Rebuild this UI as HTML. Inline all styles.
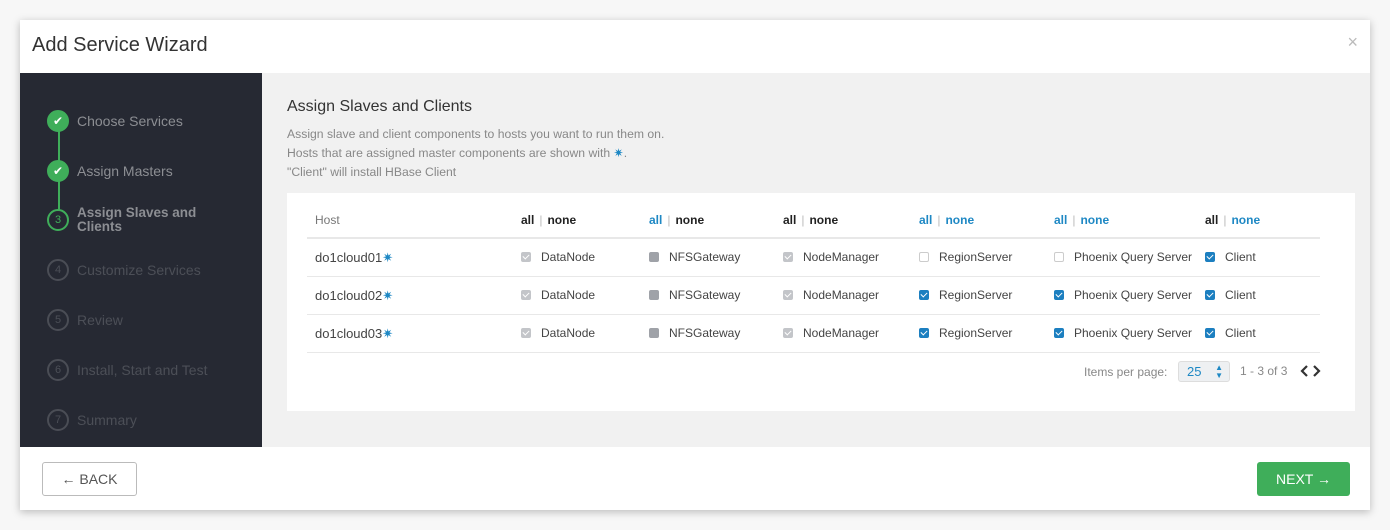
<!DOCTYPE html>
<html><head><meta charset="utf-8"><style>
*{box-sizing:border-box;margin:0;padding:0}
body{width:1390px;height:530px;background:#f7f7f7;font-family:"Liberation Sans",sans-serif;position:relative;overflow:hidden}
.modal{position:absolute;left:20px;top:20px;width:1350px;height:490px;background:#fff;box-shadow:0 2px 8px rgba(0,0,0,.25)}
.title{position:absolute;left:12px;top:14px;font-size:20px;color:#333}
.close{position:absolute;right:12px;top:12px;font-size:18px;color:#bbb}
.side{position:absolute;left:0;top:53px;width:242px;height:374px;background:#262933}
.content{position:absolute;left:242px;top:53px;width:1108px;height:374px;background:#f1f1f1}
.step{position:absolute;left:27px;font-size:14px;color:#4c4f57;white-space:nowrap}
.step .c{position:absolute;left:0;top:0;width:22px;height:22px;border-radius:50%;border:2px solid #4a4d55;background:#262933;font-size:11px;text-align:center;line-height:18px}
.step span.lbl{position:absolute;left:30px;top:3px}
.done .c{background:#3fae5a;border-color:#3fae5a;color:#fff;font-size:12px}
.done span.lbl{color:#8c8e93}
.cur .c{border-color:#3fae5a;color:#3fae5a}
.cur span.lbl{color:#8c8e93;font-weight:bold;line-height:14px;top:-3px;font-size:13.5px}
.line{position:absolute;left:38px;width:2px;background:#3fae5a}
h3{position:absolute;left:25px;top:25px;font-size:16px;font-weight:normal;color:#333}
.desc{position:absolute;left:25px;top:52px;font-size:12.2px;color:#888;line-height:19px}
.card{position:absolute;left:25px;top:120px;width:1068px;height:218px;background:#fff}
.t{position:absolute;font-size:12px;color:#444;white-space:nowrap}
.hd{font-weight:bold;color:#222}
.bl{color:#1e88c4}
.sep{color:#bbb;font-weight:normal;margin:0 5px}
.hl{position:absolute;left:20px;width:1013px;background:#e8e8e8;height:1px}
.cb{position:absolute;width:10px;height:10px;border-radius:2px}
.g{background:#c3c5c9}
.gs{background:#9fa2a8}
.b{background:#1c7fc0}
.e{border:1px solid #ccc;background:#fff}
.cb.g::after,.cb.b::after{content:"";position:absolute;left:3px;top:1px;width:3px;height:5px;border:solid #fff;border-width:0 1.5px 1.5px 0;transform:rotate(45deg)}
.foot{position:absolute;left:0;top:427px;width:1350px;height:63px;background:#fff}
.back{position:absolute;left:22px;top:15px;width:95px;height:34px;border:1px solid #bbb;border-radius:3px;font-size:14px;color:#555;text-align:center;line-height:32px}
.next{position:absolute;right:20px;top:15px;width:93px;height:34px;background:#3fae5a;border-radius:3px;font-size:14px;color:#fff;text-align:center;line-height:34px}
</style></head><body>
<div class="modal">
<div class="title">Add Service Wizard</div><div class="close">×</div>
<div class="side">
<div class="line" style="top:47px;height:50px"></div>
<div class="line" style="top:97px;height:40px"></div>
<div class="step done" style="top:37px"><div class="c">✔</div><span class="lbl">Choose Services</span></div>
<div class="step done" style="top:87px"><div class="c">✔</div><span class="lbl">Assign Masters</span></div>
<div class="step cur" style="top:136px"><div class="c">3</div><span class="lbl">Assign Slaves and<br>Clients</span></div>
<div class="step" style="top:186px"><div class="c">4</div><span class="lbl">Customize Services</span></div>
<div class="step" style="top:236px"><div class="c">5</div><span class="lbl">Review</span></div>
<div class="step" style="top:286px"><div class="c">6</div><span class="lbl">Install, Start and Test</span></div>
<div class="step" style="top:336px"><div class="c">7</div><span class="lbl">Summary</span></div>
</div>
<div class="content">
<h3>Assign Slaves and Clients</h3>
<div class="desc">Assign slave and client components to hosts you want to run them on.<br>Hosts that are assigned master components are shown with <span class="bl">✷</span>.<br>"Client" will install HBase Client</div>
<div class="card">
<div class="t" style="left:28px;top:20px;color:#777">Host</div>
<div class="t hd" style="left:234px;top:20px">all<span class="sep">|</span>none</div>
<div class="t hd" style="left:362px;top:20px"><span class="bl">all</span><span class="sep">|</span>none</div>
<div class="t hd" style="left:496px;top:20px">all<span class="sep">|</span>none</div>
<div class="t hd" style="left:632px;top:20px"><span class="bl">all</span><span class="sep">|</span><span class="bl">none</span></div>
<div class="t hd" style="left:767px;top:20px"><span class="bl">all</span><span class="sep">|</span><span class="bl">none</span></div>
<div class="t hd" style="left:918px;top:20px">all<span class="sep">|</span><span class="bl">none</span></div>
<div class="hl" style="top:44px;height:2px"></div>
<div class="hl" style="top:83px"></div>
<div class="hl" style="top:121px"></div>
<div class="hl" style="top:159px"></div>

<div class="t" style="left:28px;top:57px;font-size:13px">do1cloud01<span class="bl">✷</span></div>
<div class="cb g" style="left:234px;top:59px"></div><div class="t" style="left:254px;top:57px">DataNode</div>
<div class="cb gs" style="left:362px;top:59px"></div><div class="t" style="left:382px;top:57px">NFSGateway</div>
<div class="cb g" style="left:496px;top:59px"></div><div class="t" style="left:516px;top:57px">NodeManager</div>
<div class="cb e" style="left:632px;top:59px"></div><div class="t" style="left:652px;top:57px">RegionServer</div>
<div class="cb e" style="left:767px;top:59px"></div><div class="t" style="left:787px;top:57px">Phoenix Query Server</div>
<div class="cb b" style="left:918px;top:59px"></div><div class="t" style="left:938px;top:57px">Client</div>

<div class="t" style="left:28px;top:95px;font-size:13px">do1cloud02<span class="bl">✷</span></div>
<div class="cb g" style="left:234px;top:97px"></div><div class="t" style="left:254px;top:95px">DataNode</div>
<div class="cb gs" style="left:362px;top:97px"></div><div class="t" style="left:382px;top:95px">NFSGateway</div>
<div class="cb g" style="left:496px;top:97px"></div><div class="t" style="left:516px;top:95px">NodeManager</div>
<div class="cb b" style="left:632px;top:97px"></div><div class="t" style="left:652px;top:95px">RegionServer</div>
<div class="cb b" style="left:767px;top:97px"></div><div class="t" style="left:787px;top:95px">Phoenix Query Server</div>
<div class="cb b" style="left:918px;top:97px"></div><div class="t" style="left:938px;top:95px">Client</div>

<div class="t" style="left:28px;top:133px;font-size:13px">do1cloud03<span class="bl">✷</span></div>
<div class="cb g" style="left:234px;top:135px"></div><div class="t" style="left:254px;top:133px">DataNode</div>
<div class="cb gs" style="left:362px;top:135px"></div><div class="t" style="left:382px;top:133px">NFSGateway</div>
<div class="cb g" style="left:496px;top:135px"></div><div class="t" style="left:516px;top:133px">NodeManager</div>
<div class="cb b" style="left:632px;top:135px"></div><div class="t" style="left:652px;top:133px">RegionServer</div>
<div class="cb b" style="left:767px;top:135px"></div><div class="t" style="left:787px;top:133px">Phoenix Query Server</div>
<div class="cb b" style="left:918px;top:135px"></div><div class="t" style="left:938px;top:133px">Client</div>

<div class="t" style="left:797px;top:172px;color:#888">Items per page:</div>
<div style="position:absolute;left:891px;top:168px;width:52px;height:21px;background:#eef0f2;border:1px solid #ddd;border-radius:3px;font-size:13px;color:#1e88c4;padding:2px 0 0 8px">25<span style="position:absolute;right:6px;top:2px;font-size:8px;line-height:8px">▲<br>▼</span></div>
<div class="t" style="left:953px;top:171px;color:#888">1 - 3 of 3</div>
<svg style="position:absolute;left:1013px;top:172px" width="22" height="12" viewBox="0 0 22 12"><path d="M7 1L2 6L7 11M14 1L19 6L14 11" fill="none" stroke="#333" stroke-width="2.2"/></svg>
</div>
</div>
<div class="foot"><div class="back">← BACK</div><div class="next">NEXT →</div></div>
</div>
</body></html>
